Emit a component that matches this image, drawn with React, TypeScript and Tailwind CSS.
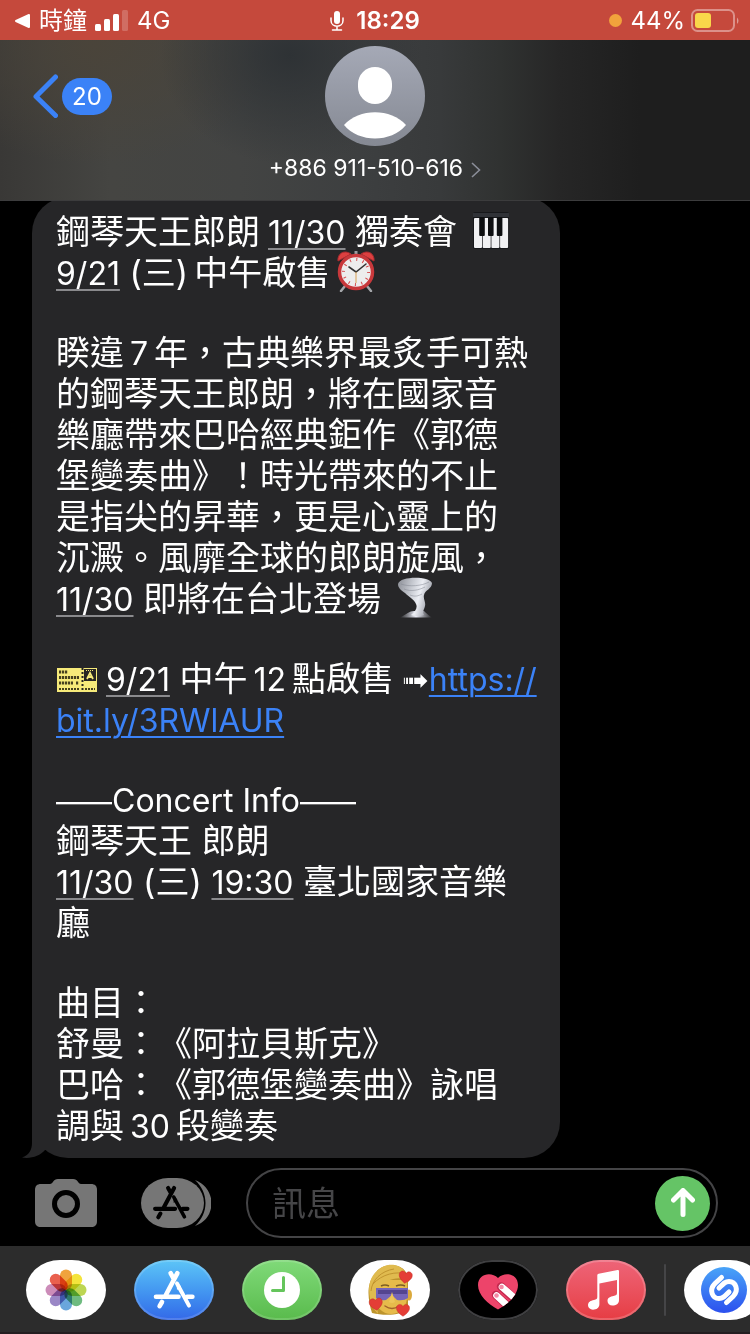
import type { ReactNode } from 'react';

const FONT = "font-['Inter','Noto_Sans_CJK_TC',sans-serif]";

const PETALS = ['#f0a33d', '#f4e43c', '#bdd653', '#6fbb80', '#6aa6dc', '#9a87c6', '#cc8cb9', '#e9604e'];

const HEART = 'M0 9C-9 3-10-1-9-5C-7-9-2-9 0-5C2-9 7-9 9-5C10-1 9 3 0 9Z';

function AppStoreGlyph() {
  return (
    <g stroke="currentColor" fill="currentColor" strokeWidth="4.6" strokeLinecap="round">
      <path d="M43.4 13.2L31.6 35.5M36.6 13.2L39.6 18.6M22 36.7H44.5M53 36.7H58.4M28 42L25.6 46.2" />
      <path d="M43 23.5L55 45.6" strokeWidth="4" />
      <path d="M42.4 21L47 26.5L43 30Z" stroke="none" />
    </g>
  );
}

// Latin text is set slightly smaller than the CJK around it
function Latin({ children }: { children: ReactNode }) {
  return <span className="text-[32px] leading-none">{children}</span>;
}

function Num({ children }: { children: ReactNode }) {
  return <span className="mx-[6px] text-[32px] leading-none">{children}</span>;
}

function Date({ children }: { children: ReactNode }) {
  return (
    <a href="#event" className="text-[32px] leading-none underline decoration-[#8a8a8d] decoration-2 underline-offset-4">
      {children}
    </a>
  );
}

function TicketLink({ children }: { children: ReactNode }) {
  return (
    <a href="#tickets" className="text-[32px] leading-none text-[#3b82f7] underline decoration-2 underline-offset-4">
      {children}
    </a>
  );
}

function Line({ children }: { children: ReactNode }) {
  return <span className="block whitespace-nowrap">{children}</span>;
}

function StatusBar() {
  return (
    <div className="grid h-10 grid-cols-[1fr_auto_1fr] items-center bg-[#c5493c] px-3 pt-px text-2xl text-white">
      <div className="flex items-center gap-2">
        <svg className="ml-[2px] h-4 w-[17px]" viewBox="0 0 17 16" aria-hidden="true">
          <path d="M2 8L15 2V14Z" fill="white" stroke="white" strokeWidth="2" strokeLinejoin="round" />
        </svg>
        <span>時鐘</span>
        <svg className="h-[22px] w-[34px]" viewBox="0 0 34 22" fill="white" aria-hidden="true">
          <rect x="0" y="14" width="6" height="7" rx="1.5" />
          <rect x="9" y="9" width="6" height="12" rx="1.5" />
          <rect x="18" y="4" width="6" height="17" rx="1.5" />
          <rect x="27" y="0" width="6" height="21" rx="1.5" opacity=".2" />
        </svg>
        <span>4G</span>
      </div>
      <div className="flex items-center gap-3">
        <svg className="h-5 w-[14px]" viewBox="0 0 14 20" aria-hidden="true">
          <rect x="4" y="0" width="6" height="13" rx="3" fill="white" />
          <path d="M1 7V9.5C1 17 13 17 13 9.5V7M7 15.5V19M2.5 19H11.5" fill="none" stroke="white" strokeWidth="1.5" strokeLinecap="round" />
        </svg>
        <span className="font-semibold">18:29</span>
      </div>
      <div className="flex items-center justify-end gap-[6px]">
        <span className="mr-[2px] size-[13px] rounded-full bg-[#f1a33c]" />
        <span>44%</span>
        <svg className="-mr-px h-6 w-12" viewBox="0 0 48 24" aria-hidden="true">
          <rect x="1" y="1" width="42" height="21" rx="5.5" fill="none" stroke="white" strokeOpacity=".4" strokeWidth="2" />
          <rect x="4" y="4" width="16" height="15" rx="3" fill="#f9d74a" />
          <path d="M46 8.5C48 10 48 13.5 46 15Z" fill="white" opacity=".45" />
        </svg>
      </div>
    </div>
  );
}

function Header() {
  return (
    <header className="relative z-10 grid h-[161px] grid-cols-[1fr_auto_1fr] border-b border-[#3c3c3d] bg-[radial-gradient(ellipse_130px_110px_at_290px_15px,#2e3235_0%,transparent_100%),radial-gradient(ellipse_180px_120px_at_95px_5px,#4a443a_0%,transparent_100%),linear-gradient(to_right,#393836_0px,#454542_110px,#434443_240px,#3d3f40_360px,#383a3b_440px,#303231_500px,#262626_560px,#1e1e1e_640px)] px-8 text-white">
      <button className="mt-7 flex h-14 items-center gap-1 self-start justify-self-start" aria-label="返回，20 則未讀">
        <svg className="h-11 w-[26px]" viewBox="0 0 26 44" aria-hidden="true">
          <path d="M23.5 3L4 22.5L23.5 41.5" fill="none" stroke="#3b82f7" strokeWidth="5" strokeLinecap="round" strokeLinejoin="round" />
        </svg>
        <span className="flex h-[37px] w-[50px] items-center justify-center rounded-full bg-[#3b82f7] pt-[2px] text-2xl">20</span>
      </button>
      <div className="flex flex-col items-center pt-[6px]">
        <svg className="size-[100px] rounded-full" viewBox="0 0 100 100" aria-hidden="true">
          <defs>
            <linearGradient id="avatar" x2="0" y2="1">
              <stop stopColor="#a5a9b6" />
              <stop offset="1" stopColor="#858993" />
            </linearGradient>
          </defs>
          <rect width="100" height="100" fill="url(#avatar)" />
          <rect x="33" y="21" width="34" height="37" rx="17" fill="white" />
          <path d="M19 79C34 62 66 62 81 79C66 97 34 97 19 79Z" fill="white" />
        </svg>
        <button className="mt-2 flex h-7 items-center gap-2 text-[23px]">
          +886 911-510-616
          <svg className="mt-1 h-4 w-[10px]" viewBox="0 0 10 16" aria-hidden="true">
            <path d="M1 1L8.5 8L1 15" fill="none" stroke="#8b8e99" strokeWidth="1.6" />
          </svg>
        </button>
      </div>
    </header>
  );
}

function Piano() {
  return (
    <svg className="-my-1 ml-[6px] inline-block h-[37px] w-9 align-[-1px]" viewBox="0 0 36 37" role="img" aria-label="鋼琴鍵盤">
      <rect width="36" height="37" rx="2" fill="#17181b" />
      <rect y="1" width="36" height="4" fill="#303237" />
      {[1, 9.7, 18.4, 27.1].map((x) => (
        <rect key={x} x={x} y="6" width="8" height="30" rx="1" fill="#f1f1f3" />
      ))}
      {[6.2, 15, 23.8].map((x) => (
        <rect key={x} x={x} y="5" width="5.6" height="19" rx="1" fill="#0e0f11" />
      ))}
    </svg>
  );
}

function AlarmClock() {
  return (
    <svg className="-my-1 ml-[6px] inline-block h-[42px] w-10 align-[-3px]" viewBox="0 0 40 42" role="img" aria-label="鬧鐘">
      <path d="M9 36L5 41M31 36L35 41" stroke="#a4a6aa" strokeWidth="2.5" strokeLinecap="round" />
      <path d="M18.5 1H21.5V6H18.5Z" fill="#9b9da1" />
      <path d="M2 11C1 4 8-1 15 4Z" fill="#dc4040" stroke="#a92b2f" />
      <path d="M38 11C39 4 32-1 25 4Z" fill="#dc4040" stroke="#a92b2f" />
      <circle cx="20" cy="22" r="16.5" fill="#ededed" stroke="#c8383b" strokeWidth="3.5" />
      <circle cx="20" cy="22" r="12.5" fill="none" stroke="#d4494b" strokeWidth="3" strokeDasharray="1 5.54" />
      <path d="M13 17L20 22L30 14" fill="none" stroke="#333" strokeWidth="1.6" strokeLinecap="round" />
      <path d="M20 22V33" stroke="#d9a153" />
    </svg>
  );
}

function Tornado() {
  return (
    <svg className="-my-1 ml-[6px] inline-block h-[41px] w-9 align-[-3px]" viewBox="0 0 36 41" role="img" aria-label="龍捲風">
      <defs>
        <linearGradient id="tornado" x1="0" y1="0" x2="1" y2=".3">
          <stop stopColor="#8a8d95" />
          <stop offset=".45" stopColor="#c9ccd3" />
          <stop offset=".7" stopColor="#eceef4" />
          <stop offset="1" stopColor="#a2a5ae" />
        </linearGradient>
        <linearGradient id="mist">
          <stop stopColor="#dfe2ee" stopOpacity="0" />
          <stop offset=".5" stopColor="#eceef8" />
          <stop offset="1" stopColor="#dfe2ee" stopOpacity="0" />
        </linearGradient>
      </defs>
      <path d="M3 40.5C10 37 12 34 17 34H27C29 36 31 38 35 40.5Z" fill="url(#mist)" />
      <path d="M1 7C3-1 32-1 35 6C35 12 28 13 27 18C26 22 29 25 28 29C27 33 25 35 27 38C22 40 17 39 14 38C18 35 21 31 19 27C17 22 12 20 8 16C4 13 1 11 1 7Z" fill="url(#tornado)" />
      <path d="M4 7C12 10 25 9 32 5M7 12C14 15 22 13 28 10M13 18C18 20 21 19 25 17" fill="none" stroke="#82858f" opacity=".5" />
    </svg>
  );
}

function Ticket() {
  return (
    <svg className="mr-2 inline-block h-6 w-[42px] align-[-1px]" viewBox="0 0 42 24" role="img" aria-label="門票">
      <rect x="1" width="40" height="24" fill="#f6ea7a" />
      <rect x="28" y="1" width="12" height="12" fill="#272522" />
      <path d="M26.5 0V24" stroke="#272522" strokeWidth="2" strokeDasharray="2 2" />
      <path d="M31 11L34 5L37 11M32.5 9H35.5" fill="none" stroke="#f6ea7a" strokeWidth="1.8" />
      <path d="M30 2.5H38" stroke="#f6ea7a" strokeDasharray="1 1" />
      <path d="M3 4H12M3 9.5H23M3 15H17M20 15H23" stroke="#45401f" strokeWidth="3" strokeDasharray="2.2 .8" />
      <path d="M3 21H24M29 21H39" stroke="#45401f" strokeWidth="2" strokeDasharray="2 1" />
    </svg>
  );
}

function Message() {
  return (
    <div className="relative ml-8 w-[528px] max-w-[90%] rounded-[36px] bg-[#262628] px-6 pt-[14px] pb-3 text-[34px] leading-[41px] text-white [text-spacing-trim:space-all]">
      <svg className="absolute bottom-0 -left-[10px] h-10 w-10" viewBox="0 0 40 40" aria-hidden="true">
        <path d="M10 0V25C10 32 7 37 0 39.5C9 41 18 38 23 32H40V0Z" fill="#262628" />
      </svg>
      <div className="relative flex flex-col gap-[39px]">
        <p>
          <Line>鋼琴天王郎朗<span className="ml-2"><Date>11/30</Date></span> 獨奏會 <Piano /></Line>
          <Line><Date>9/21</Date> (三)<span className="ml-[6px]">中午啟售</span><AlarmClock /></Line>
        </p>
        <p>
          <Line>睽違<Num>7</Num>年，古典樂界最炙手可熱</Line>
          <Line>的鋼琴天王郎朗，將在國家音</Line>
          <Line>樂廳帶來巴哈經典鉅作《郭德</Line>
          <Line>堡變奏曲》！時光帶來的不止</Line>
          <Line>是指尖的昇華，更是心靈上的</Line>
          <Line>沉澱。風靡全球的郎朗旋風，</Line>
          <Line><Date>11/30</Date> 即將在台北登場 <Tornado /></Line>
        </p>
        <p>
          <Line>
            <Ticket /><Date>9/21</Date> 中午<Num>12</Num>點啟售
            <span className="ml-2 inline-block font-['DejaVu_Sans'] text-[32px] leading-none">➟</span>
            <TicketLink>https://</TicketLink>
          </Line>
          <Line><TicketLink>bit.ly/3RWlAUR</TicketLink></Line>
        </p>
        <p>
          <Line>
            <span className="text-[28px] leading-none">——</span>
            <Latin>Concert Info</Latin>
            <span className="text-[28px] leading-none">——</span>
          </Line>
          <Line>鋼琴天王 郎朗</Line>
          <Line><Date>11/30</Date> (三) <Date>19:30</Date> 臺北國家音樂</Line>
          <Line>廳</Line>
        </p>
        <p>
          <Line>曲目：</Line>
          <Line>舒曼：《阿拉貝斯克》</Line>
          <Line>巴哈：《郭德堡變奏曲》詠唱</Line>
          <Line>調與<Num>30</Num>段變奏</Line>
        </p>
      </div>
    </div>
  );
}

function Composer() {
  return (
    <form className="flex h-[88px] items-center bg-black pt-[2px] pr-8 pl-[35px]" onSubmit={(e) => e.preventDefault()}>
      <button type="button" aria-label="相機" className="shrink-0">
        <svg className="h-12 w-[62px]" viewBox="0 0 62 48" aria-hidden="true">
          <path d="M6 5H15C18 5 18 0 23 0H38C43 0 43 5 46 5H56C60 5 62 7 62 11V42C62 46 60 48 56 48H6C2 48 0 46 0 42V11C0 7 2 5 6 5Z" fill="#767676" />
          <circle cx="31" cy="25" r="11.5" fill="none" stroke="black" strokeWidth="5" />
        </svg>
      </button>
      <button type="button" aria-label="App" className="ml-11 shrink-0">
        <svg className="h-[50px] w-[70px] text-black" viewBox="0 0 70 50" aria-hidden="true">
          <path d="M54 2C76 10 76 41 54 48C68 35 68 15 54 2Z" fill="#767676" />
          <rect width="63" height="50" rx="27" ry="25" fill="#767676" />
          <g transform="translate(-5.5 -1.8) scale(.89)">
            <AppStoreGlyph />
          </g>
        </svg>
      </button>
      <div className="ml-[35px] flex h-[70px] min-w-0 flex-1 items-center rounded-full border-2 border-[#444446] pr-[6px] pl-6">
        <input aria-label="訊息" placeholder="訊息" className="w-0 min-w-0 flex-1 bg-transparent text-[34px] text-white outline-none placeholder:text-[#464648]" />
        <button aria-label="傳送" className="flex size-[55px] shrink-0 items-center justify-center rounded-full bg-[#65c466]">
          <svg className="h-[30px] w-6" viewBox="0 0 24 30" aria-hidden="true">
            <path d="M12 3V26.5M2.5 12L12 2.5L21.5 12" fill="none" stroke="white" strokeWidth="5" strokeLinecap="round" strokeLinejoin="round" />
          </svg>
        </button>
      </div>
    </form>
  );
}

function DockApp({ label, className, children }: { label: string; className: string; children: ReactNode }) {
  return (
    <button aria-label={label} className={`h-[60px] w-20 shrink-0 overflow-hidden rounded-[34px/30px] ${className}`}>
      <svg className="h-[60px] w-20" viewBox="0 0 80 60" aria-hidden="true">
        {children}
      </svg>
    </button>
  );
}

function Memoji() {
  return (
    <>
      <path d="M24 15C31 2 54 1 58 17V48C52 56 34 56 22 53C18 40 16 25 24 15Z" fill="#bd942c" />
      <path d="M25 20H57V38C56 49 49 54 41 54C33 54 26 48 25 38Z" fill="#e6bb4b" />
      <ellipse cx="59" cy="35" rx="3" ry="5.5" fill="#dba93c" />
      <path d="M23 48C17 34 18 19 26 12C37 0 56 3 59 22C52 15 37 18 28 28C24 35 27 44 28 54Z" fill="#e0bb4f" />
      <path d="M23 24C32 14 46 11 57 14M21 31C22 20 31 11 44 9" fill="none" stroke="#c0942f" strokeWidth="1" />
      <path d="M31 26Q35 24 39 26M46 26Q51 24 55 26" fill="none" stroke="#7b5d24" strokeWidth="1.5" />
      <path d="M26 28H58V38Q54 41 47 40L42 35L36 40Q29 41 26 38Z" fill="#7565b8" />
      <path d="M28 30H57V34H28Z" fill="#54458f" />
      <path d="M42 32L39 42Q42 44 45 42Z" fill="#edc65a" />
      <path d="M35 46Q42 51 49 46" fill="none" stroke="#a4642b" strokeWidth="1.5" strokeLinecap="round" />
      <g fill="#e43e36" stroke="#c32c2a" strokeWidth=".6">
        <path d={HEART} transform="translate(55.5 17) scale(.7) rotate(8)" />
        <path d={HEART} transform="translate(26 44) scale(.7) rotate(-8)" />
        <path d={HEART} transform="translate(53 50) scale(.7)" />
      </g>
    </>
  );
}

function Dock() {
  return (
    <nav className="flex h-[88px] items-start gap-7 overflow-hidden border-b-2 border-[#231d20] bg-[#2c2c2c] pt-[14px] pl-[26px]">
      <DockApp label="照片" className="bg-white">
        {PETALS.map((color, i) => (
          <rect key={color} x="34" y="9.5" width="12" height="20.5" rx="6" fill={color} transform={`rotate(${i * 45} 40 30)`} className="mix-blend-multiply" />
        ))}
      </DockApp>
      <DockApp label="App Store" className="bg-linear-to-b from-[#5dc5f7] to-[#3468e8] text-white inset-ring-2 inset-ring-white/15">
        <AppStoreGlyph />
      </DockApp>
      <DockApp label="時鐘" className="bg-linear-to-b from-[#80da79] to-[#59bb4c] inset-ring-2 inset-ring-white/15">
        <circle cx="40" cy="30" r="18" fill="white" />
        <path d="M41.5 17.5V30.5H30.5" fill="none" stroke="#65c55c" strokeWidth="3" strokeLinecap="round" strokeLinejoin="round" />
      </DockApp>
      <DockApp label="Memoji" className="bg-white">
        <Memoji />
      </DockApp>
      <DockApp label="Digital Touch" className="bg-black inset-ring-2 inset-ring-[#3f3f41]">
        <defs>
          <clipPath id="touch">
            <path d="M40 49.5C30 44 20 35 20 25C20 14 33 11 40 18C47 11 60 14 60 25C60 35 50 44 40 49.5Z" />
          </clipPath>
        </defs>
        <g clipPath="url(#touch)">
          <rect width="80" height="60" fill="#ed446a" />
          <path d="M43 26.5L59 41M38 35L54 50" stroke="#c5294f" strokeWidth="8.5" strokeLinecap="round" />
          <path d="M44 27L60 41M38.5 35.5L54 50" stroke="white" strokeWidth="6.6" strokeLinecap="round" />
          <circle cx="43.5" cy="27" r="2.3" fill="#f48ba6" />
          <circle cx="38.5" cy="35.5" r="2.3" fill="#f48ba6" />
        </g>
      </DockApp>
      <DockApp label="音樂" className="bg-linear-to-b from-[#ee6478] to-[#e63c43] inset-ring-2 inset-ring-white/20">
        <path d="M31.3 15.3Q31.3 14 32.6 13.7L51.6 10Q53 9.8 53 11V40C53 44 50 45.5 46.5 45.5C43.5 45.5 41.5 43.5 41.5 41C41.5 37.5 44.5 36.5 47.5 36C50 35.5 51 35 51 33V20L33.4 23.5V44C33.4 48 30.5 49.7 27 49.7C24 49.7 22 47.7 22 45.3C22 42 24.5 40.7 28 40C30.5 39.5 31.3 39 31.3 37Z" fill="white" />
      </DockApp>
      <div className="-ml-[10px] flex shrink-0 gap-[18px]">
        <span className="mt-1 h-[52px] w-[2px] rounded-full bg-[#454547]" />
        <DockApp label="Shazam" className="bg-white">
          <defs>
            <linearGradient id="shazam" x2="0" y2="1">
              <stop stopColor="#49a4f8" />
              <stop offset="1" stopColor="#2c50ee" />
            </linearGradient>
          </defs>
          <circle cx="40" cy="30" r="23" fill="url(#shazam)" />
          <g fill="none" stroke="white" strokeWidth="5" strokeLinecap="round">
            <path d="M37.5 17.5L31 23.5C24.5 30 28.5 38.5 35 38.5C38.5 38.5 40 37 45 32" />
            <path d="M42.5 42.5L49 36.5C55.5 30 51.5 21.5 45 21.5C41.5 21.5 40 23 35 28" />
          </g>
        </DockApp>
      </div>
    </nav>
  );
}

export default function App() {
  return (
    <div className={`flex min-h-screen flex-col overflow-hidden bg-black ${FONT}`}>
      <StatusBar />
      <Header />
      <main className="-mt-1 flex-1">
        <Message />
      </main>
      <Composer />
      <Dock />
    </div>
  );
}
